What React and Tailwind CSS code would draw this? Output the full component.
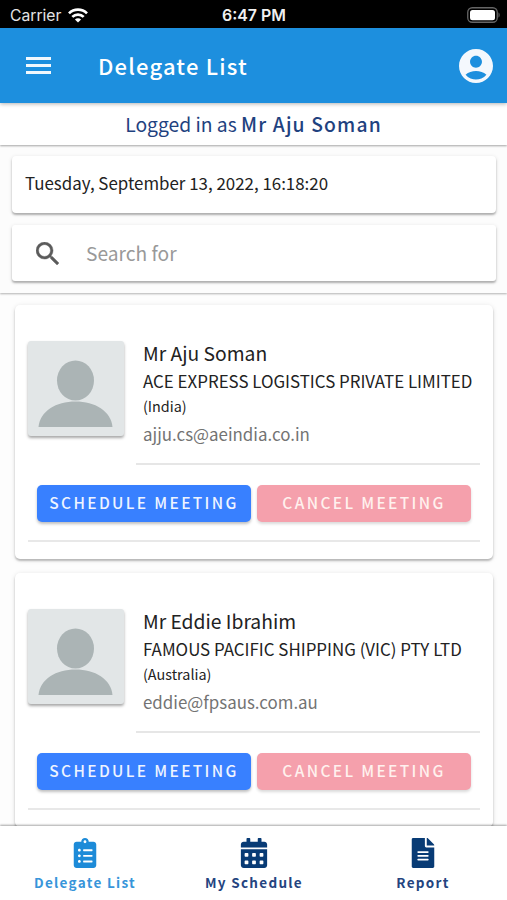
import { FaClipboardList, FaCalendarAlt, FaFileAlt } from "react-icons/fa";

const delegates = [
  {
    name: "Mr Aju Soman",
    company: "ACE EXPRESS LOGISTICS PRIVATE LIMITED",
    country: "(India)",
    email: "ajju.cs@aeindia.co.in",
  },
  {
    name: "Mr Eddie Ibrahim",
    company: "FAMOUS PACIFIC SHIPPING (VIC) PTY LTD",
    country: "(Australia)",
    email: "eddie@fpsaus.com.au",
  },
];

function StatusBar() {
  return (
    <div className="grid h-7 shrink-0 grid-cols-3 items-center bg-black pl-2.5 pr-[7px] pt-0.5 font-['Inter','Liberation_Sans',sans-serif] text-white">
      <div className="flex items-center gap-[7px]">
        <span className="text-[15.700px] leading-7 text-[#e4e4e4]">Carrier</span>
        <svg viewBox="0 0 20 15" className="h-[15px] w-5 -translate-y-px" fill="none" stroke="#fff" strokeWidth="2.7">
          <path d="M1 5.4a12.8 12.8 0 0 1 18 0" />
          <path d="M4.3 8.9a8.1 8.1 0 0 1 11.4 0" />
          <path d="M10 14.6 6.9 11.5a4.4 4.4 0 0 1 6.2 0z" fill="#fff" stroke="none" />
        </svg>
      </div>
      <span className="pr-0.5 text-center text-[15.900px] font-semibold leading-7 text-[#f0f0f0]">6:47 PM</span>
      <svg viewBox="0 0 33 16" className="h-4 w-[33px] -translate-y-px justify-self-end">
        <rect x="0.75" y="0.75" width="29.5" height="14.5" rx="4.5" fill="none" stroke="#666" strokeWidth="1.3" />
        <rect x="3" y="3" width="25" height="10.300" rx="2.5" fill="#fff" />
        <path d="M31.500 5.5c1.5.6 1.5 4.400 0 5z" fill="#666" />
      </svg>
    </div>
  );
}

function Header() {
  return (
    <header className="z-30 flex h-[75px] shrink-0 items-center bg-[#1d8fde] pl-[26px] pr-[14px] text-white shadow-[0_1px_4px_rgba(0,0,0,0.3)]">
      <div className="flex w-[25px] flex-col gap-1">
        <span className="h-[3px] bg-[#f1f8fd]" />
        <span className="h-[3px] bg-[#f1f8fd]" />
        <span className="h-[3px] bg-[#f1f8fd]" />
      </div>
      <h1 className="ml-[47px] flex-1 pb-0.5 text-[22px] font-medium leading-8 tracking-[1.2px]">Delegate List</h1>
      <svg viewBox="2 2 20 20" className="h-[34px] w-[34px]" fill="#f4f8fd">
        <path d="M12 2C6.480 2 2 6.480 2 12s4.480 10 10 10 10-4.480 10-10S17.520 2 12 2zm0 4c1.930 0 3.500 1.570 3.500 3.500S13.930 13 12 13s-3.500-1.570-3.500-3.500S10.070 6 12 6zm0 14c-2.030 0-4.430-.820-6.140-2.880C7.550 15.800 9.680 15 12 15s4.450.8 6.140 2.120C16.430 19.180 14.030 20 12 20z" />
      </svg>
    </header>
  );
}

function Avatar() {
  return (
    <div className="h-[95px] w-24 shrink-0 overflow-hidden rounded-[3px] bg-[#e2e6e7] shadow-[0_2px_3px_rgba(0,0,0,0.35)]">
      <svg viewBox="0 0 96 95" className="h-full w-full" fill="#abb4b5">
        <ellipse cx="47.500" cy="39.500" rx="18.500" ry="20" />
        <path d="M10.500 86C12 70 28 60.500 47.500 60.500S83 70 84.500 86z" />
      </svg>
    </div>
  );
}

function DelegateCard({ name, company, country, email }) {
  return (
    <article className="h-[254px] shrink-0 rounded-[5px] bg-white px-[13px] pt-9 shadow-[0_2px_2px_rgba(0,0,0,0.22),0_1px_5px_rgba(0,0,0,0.12)]">
      <div className="flex h-[124px]">
        <Avatar />
        <div className="ml-3 min-w-0 flex-1 border-b-2 border-[#e6e6e6] pl-[7px]">
          <p className="h-[26px] whitespace-nowrap text-[19.300px] leading-[25px] text-[#222]">{name}</p>
          <p className="h-[27px] whitespace-nowrap text-[16.900px] leading-7 text-[#222]">{company}</p>
          <p className="h-[26px] whitespace-nowrap text-[14.400px] leading-6 text-[#222]">{country}</p>
          <p className="h-7 whitespace-nowrap text-[16.900px] leading-7 text-[#737373]">{email}</p>
        </div>
      </div>
      <div className="flex h-[77px] items-start gap-1.5 border-b-2 border-[#e8e8e8] pl-[9px] pt-5">
        <button className="h-[37px] w-[214px] rounded-[5px] bg-[#3880ff] pb-[3px] text-[15.500px] font-medium leading-[34px] tracking-[2.350px] text-[#eef4ff] shadow-[0_2px_3px_rgba(0,0,0,0.25)]">
          SCHEDULE MEETING
        </button>
        <button className="h-[37px] w-[214px] rounded-[5px] bg-[#f5a0ac] pb-[3px] text-[15.500px] font-medium leading-[34px] tracking-[2.350px] text-[#fff1ee] shadow-[0_2px_3px_rgba(0,0,0,0.15)]">
          CANCEL MEETING
        </button>
      </div>
    </article>
  );
}

function Tab({ icon: Icon, label, iconColor, textColor }) {
  return (
    <div className="flex flex-1 flex-col items-center pt-3">
      <Icon className={`h-[30px] w-[30px] ${iconColor}`} />
      <span className={`pl-px text-[13.500px] font-bold leading-7 tracking-[1.300px] ${textColor}`}>{label}</span>
    </div>
  );
}

export default function App() {
  return (
    <div className="flex h-[900px] w-[507px] flex-col overflow-hidden bg-white font-['Noto_Sans_CJK_SC','Noto_Sans',sans-serif]">
      <StatusBar />
      <Header />
      <div className="z-20 flex h-[42px] shrink-0 items-center justify-center whitespace-pre bg-white text-[19.300px] text-[#1f427f] shadow-[0_1px_2px_rgba(0,0,0,0.35)]">
        <span>Logged in as </span>
        <span className="font-medium tracking-[1.150px]">Mr Aju Soman</span>
      </div>
      <section className="z-10 flex h-[148px] shrink-0 flex-col gap-3 bg-[#fcfcfc] pl-3 pr-[11px] pt-[11px] shadow-[0_1px_2px_rgba(0,0,0,0.3)]">
        <div className="h-[57px] rounded-[4px] bg-white pl-[13px] text-[16.900px] leading-[54px] text-[#222] shadow-[0_2px_2px_rgba(0,0,0,0.25),0_1px_4px_rgba(0,0,0,0.12)]">
          Tuesday, September 13, 2022, 16:18:20
        </div>
        <div className="flex h-[56px] items-center rounded-[3px] bg-white pl-[24px] shadow-[0_2px_2px_rgba(0,0,0,0.25),0_1px_4px_rgba(0,0,0,0.12)]">
          <svg viewBox="3 3 17.500 17.500" className="h-[23px] w-[23px]" fill="#5b5b5b" stroke="#5b5b5b" strokeWidth="0.3">
            <path d="M15.500 14h-.790l-.280-.270A6.471 6.471 0 0 0 16 9.500 6.500 6.500 0 1 0 9.500 16c1.610 0 3.090-.590 4.230-1.570l.270.280v.790l5 4.990L20.490 19l-4.990-5zm-6 0C7.010 14 5 11.990 5 9.500S7.010 5 9.500 5 14 7.010 14 9.500 11.990 14 9.500 14z" />
          </svg>
          <span className="ml-[27px] text-[19.200px] text-[#999]">Search for</span>
        </div>
      </section>
      <main className="flex min-h-0 flex-1 flex-col gap-[13.500px] overflow-hidden bg-[#fdfdfd] pl-[15px] pr-3.5 pt-3">
        {delegates.map((delegate) => (
          <DelegateCard key={delegate.email} {...delegate} />
        ))}
      </main>
      <nav className="z-10 flex h-[74px] shrink-0 bg-white shadow-[0_-1px_2px_rgba(0,0,0,0.35)]">
        <Tab icon={FaClipboardList} label="Delegate List" iconColor="text-[#1d8bd8]" textColor="text-[#3795da]" />
        <Tab icon={FaCalendarAlt} label="My Schedule" iconColor="text-[#083b75]" textColor="text-[#24447f]" />
        <Tab icon={FaFileAlt} label="Report" iconColor="text-[#083b75]" textColor="text-[#24447f]" />
      </nav>
    </div>
  );
}
